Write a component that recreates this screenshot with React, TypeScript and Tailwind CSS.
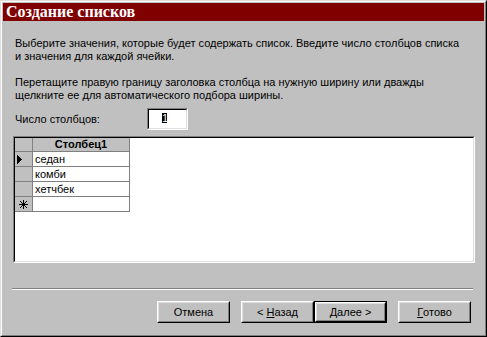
import { Fragment } from 'react'

const raised =
  'border border-t-white border-l-white border-r-black border-b-black'
const raisedInner =
  'border border-t-[#dfdfdf] border-l-[#dfdfdf] border-r-[#808080] border-b-[#808080]'

function Button({ children, isDefault = false }: { children: React.ReactNode; isDefault?: boolean }) {
  if (isDefault) {
    return (
      <div className="w-[73px] h-[22px] border border-black">
        <div className={`h-full ${raised}`}>
          <div className={`h-full ${raisedInner} flex items-center justify-center`}>{children}</div>
        </div>
      </div>
    )
  }
  return (
    <div className={`w-[73px] h-[22px] ${raised}`}>
      <div className={`h-full ${raisedInner} flex items-center justify-center`}>{children}</div>
    </div>
  )
}

function Asterisk() {
  return (
    <svg width="9" height="9" viewBox="0 0 9 9" shapeRendering="crispEdges">
      <path d="M4 0h1v9H4z M0 4h9v1H0z" fill="#000" />
      <path d="M1 1h1v1H1z M2 2h1v1H2z M3 3h1v1H3z M5 5h1v1H5z M6 6h1v1H6z M7 7h1v1H7z M7 1h1v1H7z M6 2h1v1H6z M5 3h1v1H5z M3 5h1v1H3z M2 6h1v1H2z M1 7h1v1H1z" fill="#000" />
    </svg>
  )
}

function Triangle() {
  return (
    <svg width="5" height="9" viewBox="0 0 5 9" shapeRendering="crispEdges">
      <path d="M0 0h1v9H0z M1 1h1v7H1z M2 2h1v5H2z M3 3h1v3H3z M4 4h1v1H4z" fill="#000" />
    </svg>
  )
}

export default function App() {
  const rows = ['седан', 'комби', 'хетчбек', '']

  return (
    <div
      className="w-[487px] h-[337px] bg-[#c0c0c0] border border-t-[#dfdfdf] border-l-[#dfdfdf] border-r-black border-b-black text-[11px] leading-[13px] text-black"
      style={{ fontFamily: '"Liberation Sans", Arial, sans-serif' }}
    >
      <div className="h-full border border-t-white border-l-white border-r-[#808080] border-b-[#808080] p-px flex flex-col">
        <div className="h-[18px] bg-[#800000] pl-[3px] flex items-center">
          <span
            className="text-white font-bold text-[16px] leading-[18px]"
            style={{ fontFamily: '"Liberation Serif", "Times New Roman", serif' }}
          >
            Создание списков
          </span>
        </div>

        <div className="flex-1 pl-[9px] flex flex-col">
          <p className="mt-[16px] ml-[3px]">
            Выберите значения, которые будет содержать список. Введите число столбцов списка
            <br />и значения для каждой ячейки.
          </p>
          <p className="mt-[13px] ml-[3px]">
            Перетащите правую границу заголовка столбца на нужную ширину или дважды
            <br />
            щелкните ее для автоматического подбора ширины.
          </p>

          <div className="mt-[6px] ml-[3px] h-[22px] flex items-center">
            <span className="w-[132px]">Число столбцов:</span>
            <div className="w-[41px] h-[22px] border border-t-[#808080] border-l-[#808080] border-r-white border-b-white">
              <div className="h-full bg-white border border-t-black border-l-black border-r-[#dfdfdf] border-b-[#dfdfdf] pl-[13px] pt-[3px]">
                <span className="block w-[5px] h-[10px] bg-black text-white text-[11px] leading-[10px] text-center overflow-hidden">
                  1
                </span>
              </div>
            </div>
          </div>

          <div className="mt-[6px] ml-[1px] w-[462px] h-[127px] border border-t-[#808080] border-l-[#808080] border-r-white border-b-white">
            <div className="h-full bg-white border border-t-black border-l-black border-r-[#dfdfdf] border-b-[#dfdfdf]">
              <div className="grid grid-cols-[18px_97px] w-[115px]">
                <div className="h-[14px] bg-[#c0c0c0] border-r border-b border-[#808080]" />
                <div className="h-[14px] bg-[#c0c0c0] border-r border-b border-[#808080] flex items-center justify-center font-bold">
                  Столбец1
                </div>
                {rows.map((r, i) => (
                  <Fragment key={i}>
                    <div className="h-[15px] bg-[#c0c0c0] border-r border-b border-[#808080] flex items-center">
                      {i === 0 && (
                        <span className="ml-[2px] flex">
                          <Triangle />
                        </span>
                      )}
                      {i === 3 && (
                        <span className="ml-[4px] flex">
                          <Asterisk />
                        </span>
                      )}
                    </div>
                    <div className="h-[15px] border-r border-b border-[#808080] pl-[2px] flex items-center">
                      {r}
                    </div>
                  </Fragment>
                ))}
              </div>
            </div>
          </div>

          <div className="mt-[25px] w-[461px] h-[2px] border-t border-t-[#808080] border-b border-b-white" />

          <div className="mt-[11px] ml-[145px] flex">
            <Button>Отмена</Button>
            <div className="ml-[11px] flex">
              <Button>
                &lt; <span className="underline ml-[3px]">Н</span>азад
              </Button>
              <Button isDefault>
                <span className="underline">Д</span>алее &gt;
              </Button>
            </div>
            <div className="ml-[11px]">
              <Button>
                <span className="underline">Г</span>отово
              </Button>
            </div>
          </div>
        </div>
      </div>
    </div>
  )
}
